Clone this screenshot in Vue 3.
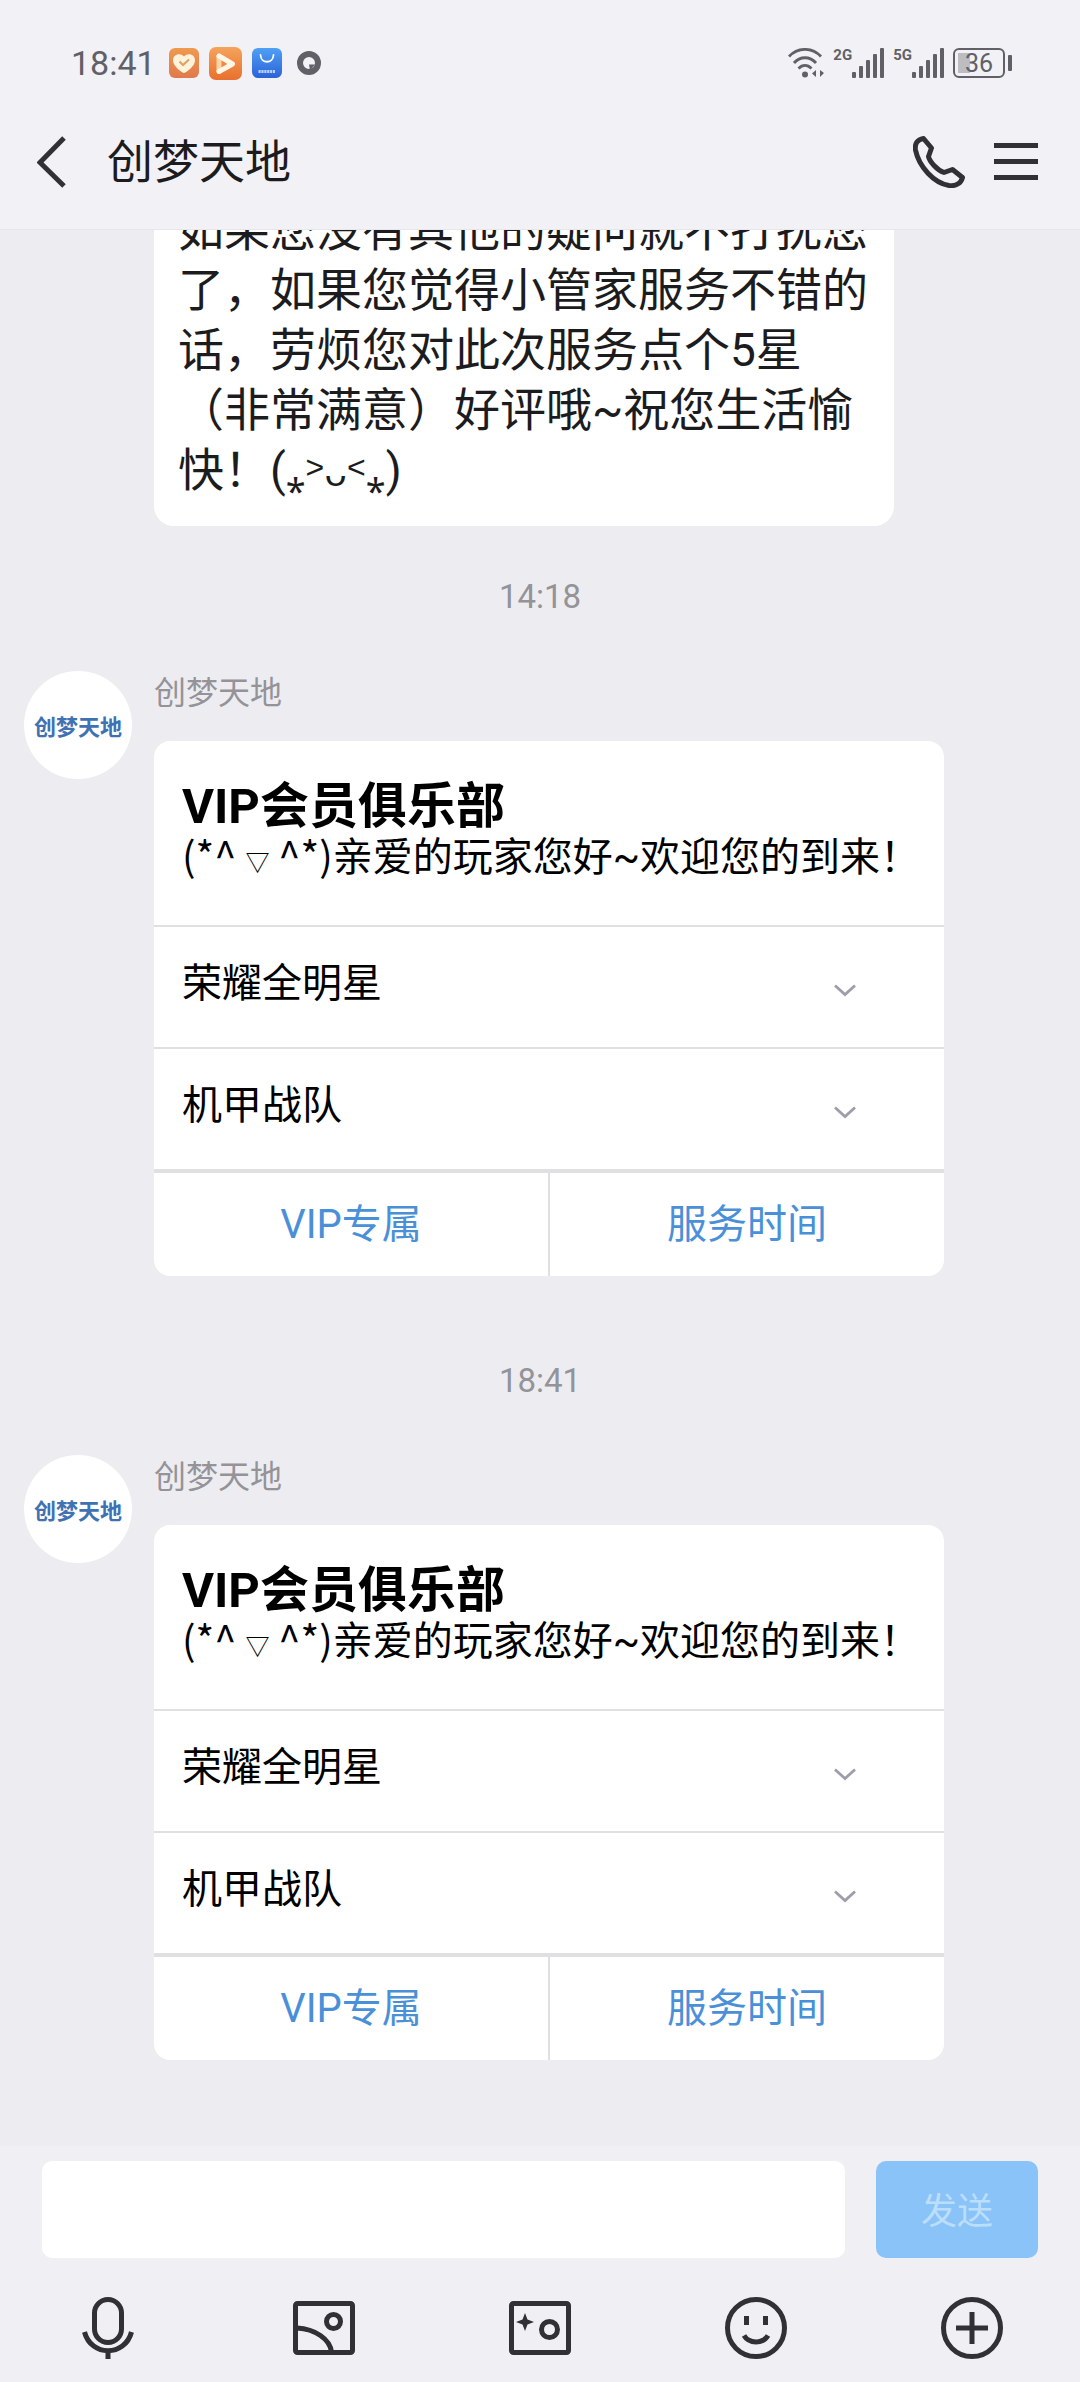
<!-- src/App.vue -->
<template>
  <div class="chat-page">
    <header class="chat-header">
      <div class="status-bar">
        <span class="status-time">18:41</span>
        <div class="status-apps">
          <svg width="30" height="30" viewBox="0 0 30 30" aria-hidden="true">
            <defs>
              <linearGradient id="heartBg" x1="0" y1="0" x2="0" y2="1">
                <stop offset="0" stop-color="#f09a50" />
                <stop offset="1" stop-color="#e0794c" />
              </linearGradient>
            </defs>
            <rect width="30" height="30" rx="6" fill="url(#heartBg)" />
            <path d="M15 25C12 24 4 18 4 12.500C4 6 11 4.500 15 8.500C19 4.500 26 6 26 12.500C26 18 18 24 15 25Z" fill="#fff3dc" />
            <path d="M10.500 13.500L14 17L20 11.500" fill="none" stroke="#e0a063" stroke-width="2" />
          </svg>
          <svg width="33" height="33" viewBox="0 0 33 33" aria-hidden="true">
            <defs>
              <linearGradient id="playBg" x1="0" y1="0" x2="0" y2="1">
                <stop offset="0" stop-color="#f5a35c" />
                <stop offset="1" stop-color="#e8702e" />
              </linearGradient>
            </defs>
            <rect width="33" height="33" rx="7" fill="url(#playBg)" />
            <path d="M10 9V24" stroke="#fbd3a8" stroke-width="5" stroke-linecap="round" />
            <path d="M10 9L23.500 17L10 24.500" fill="none" stroke="#fff6e6" stroke-width="5" stroke-linecap="round" stroke-linejoin="round" />
            <path d="M13 14V20L17.500 17Z" fill="#ee8a45" />
          </svg>
          <svg width="30" height="30" viewBox="0 0 30 30" aria-hidden="true">
            <defs>
              <linearGradient id="storeBg" x1="0" y1="0" x2="0" y2="1">
                <stop offset="0" stop-color="#4fa0f5" />
                <stop offset="1" stop-color="#2c62d8" />
              </linearGradient>
            </defs>
            <rect width="30" height="30" rx="6" fill="url(#storeBg)" />
            <path d="M8.500 7C9 16 21 16 21.500 7" fill="none" stroke="#fff" stroke-width="1.800" stroke-linecap="round" />
            <path d="M6.500 23.500H23" stroke="#b9d2fb" stroke-width="3" stroke-dasharray="2.200 .7" />
          </svg>
          <svg width="34" height="30" viewBox="0 0 34 30" aria-hidden="true">
            <circle cx="17" cy="15" r="9" fill="none" stroke="#606066" stroke-width="6" />
            <path d="M17 16.500H23L18 22.500Z" fill="#606066" />
          </svg>
        </div>
        <div class="status-right">
          <svg width="36" height="30" viewBox="0 0 36 30" fill="none" stroke="#606066" stroke-width="2.800" aria-hidden="true">
            <path d="M1 8.500C10 -1 24 -1 33 8.500" />
            <path d="M6 15C12 8 22 8 28 15" />
            <path d="M10.500 20.500C14.500 16.500 19.500 16.500 23.500 20.500" />
            <circle cx="17" cy="26.500" r="3" fill="#606066" stroke="none" />
            <path d="M28 22V29L24 25.500ZM32 22V29L36 25Z" fill="#606066" stroke="none" />
          </svg>
          <div v-for="net in networks" :key="net" class="network">
            <span class="network-label">{{ net }}</span>
            <svg width="32" height="30" viewBox="0 0 32 30" fill="#606066" aria-hidden="true">
              <rect x="0" y="24" width="4" height="6" rx="1" />
              <rect x="7" y="18" width="4" height="12" rx="1" />
              <rect x="14" y="12" width="4" height="18" rx="1" />
              <rect x="21" y="6" width="4" height="24" rx="1" />
              <rect x="28" y="0" width="4" height="30" rx="1" />
            </svg>
          </div>
          <div class="battery">
            <span class="battery-body">36</span>
            <span class="battery-tip"></span>
          </div>
        </div>
      </div>

      <nav class="nav-bar">
        <button class="icon-btn" aria-label="返回">
          <svg width="30" height="52" viewBox="0 0 30 52">
            <path d="M27 2L3 26.500L27 50" fill="none" stroke="#303035" stroke-width="5" />
          </svg>
        </button>
        <h1 class="nav-title">{{ account }}</h1>
        <button class="icon-btn" aria-label="电话">
          <svg width="52" height="52" viewBox="0 0 52 52">
            <path
              d="M10.500 2.500C4 3.500 1.500 8 2.500 14C6 31 21 47 36 49.500C43 50.500 48 47 49.500 41.500L39.500 33.500L31 36.500C24 34 16.500 25.500 15.500 20.500L18.500 12Z"
              fill="none" stroke="#303035" stroke-width="5" stroke-linejoin="round"
            />
          </svg>
        </button>
        <button class="icon-btn menu-btn" aria-label="菜单">
          <svg width="44" height="38" viewBox="0 0 44 38" fill="#303035">
            <rect width="44" height="5" />
            <rect y="16" width="44" height="5" />
            <rect y="32" width="44" height="5" />
          </svg>
        </button>
      </nav>
    </header>

    <main class="messages">
      <div class="bubble">{{ greeting }}(<span class="face">⁎<sup>˃</sup>ᴗ<sup>˂</sup>⁎</span>)</div>

      <template v-for="msg in messages" :key="msg.time">
        <time class="msg-time">{{ msg.time }}</time>
        <article class="message">
          <div class="avatar">{{ account }}</div>
          <div class="message-body">
            <div class="sender">{{ account }}</div>
            <section class="card">
              <div class="card-head">
                <h2>VIP会员俱乐部</h2>
                <p><span class="hello-face">(*^ <small>▽</small> ^*)</span>亲爱的玩家您好~欢迎您的到来！</p>
              </div>
              <button v-for="game in games" :key="game" class="card-row" aria-expanded="false">
                <span>{{ game }}</span>
                <svg width="22" height="13" viewBox="0 0 22 13" aria-hidden="true">
                  <path d="M1 1.500L11 10.500L21 1.500" fill="none" stroke="#9d9dab" stroke-width="2.800" />
                </svg>
              </button>
              <div class="card-actions">
                <button v-for="action in actions" :key="action">{{ action }}</button>
              </div>
            </section>
          </div>
        </article>
      </template>
    </main>

    <footer class="composer">
      <form class="composer-form" @submit.prevent="send">
        <input v-model="draft" type="text" aria-label="消息" />
        <button type="submit" :disabled="!draft">发送</button>
      </form>
      <div class="tools">
        <button class="icon-btn" aria-label="语音">
          <svg width="64" height="64" viewBox="0 0 64 64" class="tool-icon">
            <rect x="18.500" y="3.500" width="27" height="43" rx="13.500" />
            <path d="M8.500 36C15 61 49 61 55.500 36M32 55V63" />
          </svg>
        </button>
        <button class="icon-btn" aria-label="图片">
          <svg width="64" height="64" viewBox="0 0 64 64" class="tool-icon">
            <rect x="3.500" y="7.500" width="57" height="49" rx="2" />
            <circle cx="41.500" cy="25.500" r="7" />
            <path d="M5 32C23 33 38 43 39.500 56" />
          </svg>
        </button>
        <button class="icon-btn" aria-label="拍摄">
          <svg width="64" height="64" viewBox="0 0 64 64" class="tool-icon">
            <rect x="3.500" y="7.500" width="57" height="49" rx="2" />
            <circle cx="41.500" cy="33.500" r="8" />
            <path class="solid" d="M17 17L19.500 23.500L26 26L19.500 28.500L17 35L14.500 28.500L8 26L14.500 23.500Z" />
          </svg>
        </button>
        <button class="icon-btn" aria-label="表情">
          <svg width="64" height="64" viewBox="0 0 64 64" class="tool-icon">
            <circle cx="32" cy="32" r="28.500" />
            <path d="M22.500 20V29M41.500 20V29M20 39.500C25 48 39 48 44 39.500" />
          </svg>
        </button>
        <button class="icon-btn" aria-label="更多">
          <svg width="64" height="64" viewBox="0 0 64 64" class="tool-icon">
            <circle cx="32" cy="32" r="28.500" />
            <path d="M32 16V48M16 32H48" />
          </svg>
        </button>
      </div>
    </footer>
  </div>
</template>

<script setup>
import { ref } from 'vue'

const account = '创梦天地'
const networks = ['2G', '5G']

const greeting =
  '如果您没有其他的疑问就不打扰您了，如果您觉得小管家服务不错的话，劳烦您对此次服务点个5星（非常满意）好评哦~祝您生活愉快！'

const messages = [{ time: '14:18' }, { time: '18:41' }]
const games = ['荣耀全明星', '机甲战队']
const actions = ['VIP专属', '服务时间']

const draft = ref('')

const send = () => {
  draft.value = ''
}
</script>

<style>
body {
  margin: 0;
}
</style>

<style scoped>
.chat-page {
  display: flex;
  flex-direction: column;
  height: 100vh;
  background: #edecf1;
  color: #1c1c1e;
  font-family: Roboto, "Noto Sans CJK SC", sans-serif;
  text-spacing-trim: space-all;
}

button,
input {
  margin: 0;
  padding: 0;
  border: none;
  background: none;
  font-family: inherit;
  color: inherit;
}

button {
  cursor: pointer;
}

svg {
  display: block;
  flex: none;
}

/* Шапка */
.chat-header {
  flex: none;
  background: #f1f1f6;
  border-bottom: 1px solid #e6e6eb;
}

.status-bar {
  display: flex;
  align-items: center;
  height: 62px;
  padding: 32px 68px 0 71px;
  color: #606066;
}

.status-time {
  font-size: 34px;
}

.status-apps {
  display: flex;
  align-items: center;
  gap: 10px;
  margin-left: 13px;
}

.status-right {
  display: flex;
  align-items: center;
  gap: 9px;
  margin-left: auto;
}

.network {
  display: flex;
}

.network-label {
  font-family: "Liberation Sans Narrow", Roboto, sans-serif;
  font-size: 15px;
  font-weight: 700;
  line-height: 15px;
}

.battery {
  display: flex;
  align-items: center;
  gap: 3px;
}

.battery-body {
  box-sizing: border-box;
  width: 52px;
  height: 30px;
  border: 2px solid #606066;
  border-radius: 6px;
  background: linear-gradient(#bcbcc1, #bcbcc1) 3px 3px / 12px 20px no-repeat;
  font-size: 25px;
  line-height: 27px;
  text-align: center;
}

.battery-tip {
  width: 4px;
  height: 16px;
  border-radius: 1px;
  background: #606066;
}

.nav-bar {
  display: flex;
  align-items: center;
  height: 135px;
  padding: 0 42px 0 37px;
}

.nav-title {
  flex: 1;
  margin: 0 0 0 40px;
  font-size: 46px;
  font-weight: 400;
  line-height: 60px;
}

.menu-btn {
  margin-left: 29px;
}

/* Сообщения */
.messages {
  display: flex;
  flex: 1;
  flex-direction: column;
  justify-content: flex-end;
  min-height: 0;
  overflow: hidden;
  padding-bottom: 52px;
}

.bubble {
  flex: none;
  align-self: flex-start;
  margin: 0 186px 0 154px;
  padding: 26px 24px;
  border-radius: 20px;
  background: #fff;
  font-size: 46px;
  line-height: 60px;
}

.face {
  font-family: "Noto Sans", "DejaVu Sans", sans-serif;
  font-size: 36px;
  line-height: 1;
}

.face sup {
  font-family: Roboto, "Noto Sans CJK SC", sans-serif;
  font-size: 32px;
  line-height: 1;
  vertical-align: 8px;
}

.msg-time {
  flex: none;
  margin: 51px 0 54px;
  color: #939398;
  font-size: 33px;
  line-height: 40px;
  text-align: center;
}

.message {
  display: flex;
  flex: none;
  gap: 22px;
  margin-bottom: 34px;
  padding: 0 136px 0 24px;
}

.avatar {
  display: flex;
  flex: none;
  align-items: center;
  justify-content: center;
  width: 108px;
  height: 108px;
  border-radius: 50%;
  background: #fff;
  color: #4071b3;
  font-size: 22px;
  font-weight: 700;
}

.message-body {
  flex: 1;
  min-width: 0;
}

.sender {
  margin-bottom: 26px;
  color: #939398;
  font-size: 32px;
  line-height: 44px;
}

.card {
  overflow: hidden;
  border-radius: 16px;
  background: #fff;
  color: #000;
}

.card-head {
  padding: 39px 8px 43px 28px;
}

.card-head h2 {
  margin: 0;
  font-size: 49px;
  font-weight: 700;
  line-height: 54px;
}

.card-head p {
  margin: 0;
  font-size: 40px;
  line-height: 48px;
}

.hello-face {
  font-family: "Noto Sans CJK SC", sans-serif;
  line-height: 1;
}

.hello-face small {
  font-size: 24px;
}

.card-row {
  display: flex;
  align-items: center;
  justify-content: space-between;
  width: 100%;
  height: 122px;
  padding: 0 88px 14px 28px;
  border-top: 2px solid #e0e0e2;
  font-size: 40px;
}

.card-row svg {
  margin-top: 20px;
}

.card-actions {
  display: flex;
  border-top: 4px solid #e0e0e2;
}

.card-actions button {
  flex: 1;
  height: 103px;
  padding-bottom: 8px;
  color: #4a90d9;
  font-size: 40px;
}

.card-actions button + button {
  border-left: 2px solid #e0e0e2;
}

/* Панель ввода */
.composer {
  flex: none;
  background: #f0eff4;
}

.composer-form {
  display: flex;
  gap: 31px;
  padding: 15px 42px 0;
}

.composer-form input {
  flex: 1;
  min-width: 0;
  height: 97px;
  padding: 0 24px;
  border-radius: 10px;
  background: #fff;
  font-size: 40px;
}

.composer-form button {
  width: 162px;
  height: 97px;
  padding-bottom: 4px;
  border-radius: 10px;
  background: #8ac3f7;
  color: #bbdefc;
  font-size: 36px;
}

.tools {
  display: grid;
  grid-template-columns: repeat(5, 1fr);
  justify-items: center;
  padding: 38px 0 22px;
}

.tool-icon {
  fill: none;
  stroke: #303035;
  stroke-width: 5;
}

.tool-icon .solid {
  fill: #303035;
  stroke: none;
}
</style>
